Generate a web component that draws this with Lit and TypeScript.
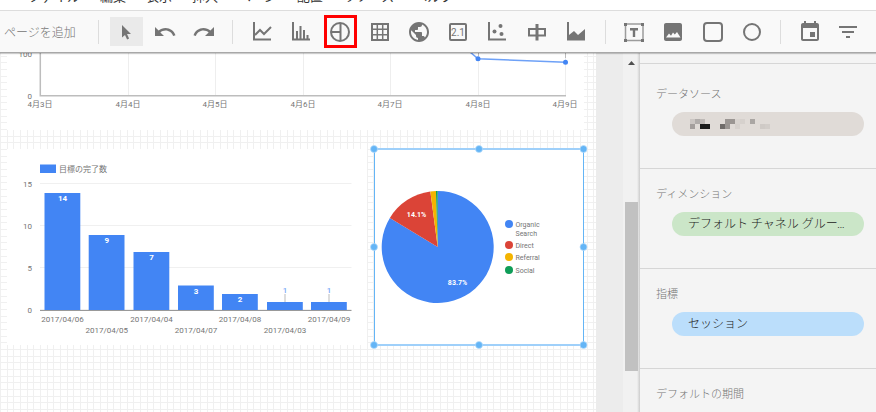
import { LitElement, html, svg, css, TemplateResult } from "lit";
import { customElement } from "lit/decorators.js";

type Icon = { label: string; art: TemplateResult; state?: string };

const axes = svg`<path fill="none" stroke="currentColor" stroke-width="2" d="M4 2v17.500h17"/>`;

const editTools: Icon[] = [
  { label: "選択", state: "active", art: svg`<path fill="currentColor" d="M8 5v12.600l3-2.700 2.100 4.500 2-.9-2.100-4.400h4z"/>` },
  { label: "元に戻す", art: svg`<path fill="currentColor" d="M12.500 8c-2.650 0-5.050.99-6.900 2.600L2 7v9h9l-3.620-3.620c1.390-1.160 3.160-1.880 5.120-1.880 3.540 0 6.550 2.310 7.600 5.500l2.370-.78C21.080 11.030 17.150 8 12.500 8z"/>` },
  { label: "やり直す", art: svg`<path fill="currentColor" d="M18.400 10.600C16.550 8.990 14.150 8 11.500 8c-4.650 0-8.580 3.030-9.960 7.220L3.900 16c1.050-3.190 4.050-5.500 7.600-5.500 1.950 0 3.730.72 5.120 1.880L13 16h9V7l-3.600 3.600z"/>` },
];

const chartTools: Icon[] = [
  { label: "期間", art: svg`${axes}<path fill="none" stroke="currentColor" stroke-width="2" d="M5 15l5-5 4 4 7-7"/>` },
  { label: "棒グラフ", art: svg`${axes}<path fill="none" stroke="currentColor" stroke-width="2" d="M8 11v8M11.500 6v13M15 10v9M18.500 15v4"/>` },
  { label: "円グラフ", state: "marked", art: svg`<g fill="none" stroke="currentColor" stroke-width="2"><circle cx="12" cy="12" r="9"/><path d="M12.500 3v18M3 12h9.500"/></g>` },
  { label: "表", art: svg`<path fill="none" stroke="currentColor" stroke-width="2" d="M4 4h16v16H4z"/><path fill="none" stroke="currentColor" stroke-width="1.500" d="M3 9.300h18M3 14.700h18M9.300 3v18M14.700 3v18"/>` },
  { label: "地図", art: svg`<path fill="currentColor" d="M12 2C6.480 2 2 6.480 2 12s4.480 10 10 10 10-4.480 10-10S17.520 2 12 2zm-1 17.930c-3.950-.49-7-3.850-7-7.930 0-.62.080-1.210.210-1.790L9 15v1c0 1.100.9 2 2 2v1.930zm6.900-2.540c-.26-.81-1-1.390-1.900-1.390h-1v-3c0-.55-.45-1-1-1H8v-2h2c.55 0 1-.45 1-1V7h2c1.100 0 2-.9 2-2v-.41c2.930 1.190 5 4.060 5 7.410 0 2.080-.8 3.970-2.100 5.390z"/>` },
  { label: "スコアカード", art: svg`<rect x="4" y="4" width="16" height="16" rx="1" fill="none" stroke="currentColor" stroke-width="2"/><text class="score" x="12" y="16" text-anchor="middle" fill="currentColor">2.1</text>` },
  { label: "散布図", art: svg`${axes}<g fill="currentColor"><circle cx="15.500" cy="6" r="2"/><circle cx="9.500" cy="11.500" r="2"/><circle cx="16.500" cy="14" r="2"/></g>` },
  { label: "ブレット", art: svg`<path fill="none" stroke="currentColor" stroke-width="2" d="M4 9h16v6.500H4z"/><path fill="none" stroke="currentColor" stroke-width="3" d="M12 4v16.500"/>` },
  { label: "面グラフ", art: svg`${axes}<path fill="currentColor" d="M5 19v-4l5-4 4 4 7-6v10z"/>` },
];

const shapeTools: Icon[] = [
  { label: "テキスト", art: svg`<rect x="3.500" y="4" width="17.500" height="16.500" fill="none" stroke="currentColor" stroke-opacity=".7" stroke-width="1.500"/><path fill="currentColor" d="M2 3h3v3H2zM19 3h3v3h-3zM2 19h3v3H2zM19 19h3v3h-3zM8 8h8v2.500h-2.800V17h-2.400v-6.500H8z"/>` },
  { label: "画像", art: svg`<path fill="currentColor" d="M21 19V5c0-1.100-.9-2-2-2H5c-1.100 0-2 .9-2 2v14c0 1.100.9 2 2 2h14c1.100 0 2-.9 2-2zM5 17.500l3-4 2 2.300 2-3.300 1.800 2 2.200-2.500 3.500 5.500z"/>` },
  { label: "長方形", art: svg`<rect x="3" y="3" width="18" height="18" rx="3" fill="none" stroke="currentColor" stroke-width="2"/>` },
  { label: "円", art: svg`<circle cx="12" cy="12" r="8" fill="none" stroke="currentColor" stroke-width="2"/>` },
];

const controlTools: Icon[] = [
  { label: "期間設定", art: svg`<path fill="currentColor" d="M17 12h-5v5h5v-5zM16 1v2H8V1H6v2H5c-1.110 0-1.990.9-1.990 2L3 19c0 1.100.89 2 2 2h14c1.100 0 2-.9 2-2V5c0-1.100-.9-2-2-2h-1V1h-2zm3 18H5V8h14v11z"/>` },
  { label: "フィルタ", art: svg`<path fill="currentColor" d="M10 18h4v-2h-4v2zM3 6v2h18V6H3zm3 7h12v-2H6v2z"/>` },
];

const days = [40, 128, 215, 303, 390, 478, 565];

const bars = [
  { value: 14, date: "2017/04/06", x: 44.5, top: 193 },
  { value: 9, date: "2017/04/05", x: 88.7, top: 235 },
  { value: 7, date: "2017/04/04", x: 133.5, top: 252 },
  { value: 3, date: "2017/04/07", x: 178, top: 285.5 },
  { value: 2, date: "2017/04/08", x: 222, top: 294 },
  { value: 1, date: "2017/04/03", x: 267, top: 302 },
  { value: 1, date: "2017/04/09", x: 311, top: 302 },
];

const scale = [
  { value: 15, y: 184 },
  { value: 10, y: 226 },
  { value: 5, y: 268 },
  { value: 0, y: 310 },
];

const slices = [
  { name: ["Organic", "Search"], from: 0, to: 0.837, color: "#4285f4", y: 224 },
  { name: ["Direct"], from: 0.837, to: 0.979, color: "#db4437", y: 245 },
  { name: ["Referral"], from: 0.979, to: 0.995, color: "#f4b400", y: 257 },
  { name: ["Social"], from: 0.995, to: 1, color: "#0f9d58", y: 270 },
];

const slicePath = (from: number, to: number) => {
  const at = (t: number) =>
    `${437.7 + 56 * Math.sin(t * 2 * Math.PI)} ${247 - 56 * Math.cos(t * 2 * Math.PI)}`;
  return `M437.7 247L${at(from)}A56 56 0 ${to - from > 0.5 ? 1 : 0} 1 ${at(to)}Z`;
};

const handles = [
  [374, 149], [479, 149], [583.5, 149], [374, 247],
  [583.5, 247], [374, 345], [479, 345], [583.5, 345],
];

/* Masked data source name: x, y, fill of each 5px cell */
const mask: [number, number, string][] = [
  [0, 0, "#cbc6c3"], [5, 0, "#b0acaa"], [10, 0, "#bfbab7"], [35, 0, "#9b9693"],
  [40, 0, "#9b9693"], [45, 0, "#d9d4d0"], [50, 0, "#d6d1cd"], [60, 0, "#aaa6a3"],
  [0, 5, "#a39e9c"], [10, 5, "#1c1c1c"], [15, 5, "#1c1c1c"], [30, 5, "#6f6b69"],
  [35, 5, "#9a9592"], [45, 5, "#d6d1cd"], [70, 5, "#cfcac6"], [75, 5, "#d2cdc9"],
];

@customElement("app-root")
export class AppRoot extends LitElement {
  static styles = css`
    :host {
      display: flex;
      flex-direction: column;
      height: 100vh;
      overflow: hidden;
      background: #fff;
      color: #757575;
      font-family: Roboto, "Noto Sans CJK JP", sans-serif;
      font-size: 12px;
    }
    button {
      border: 0;
      padding: 0;
      margin: 0;
      background: none;
      color: inherit;
      font: inherit;
      white-space: nowrap;
    }
    .menu {
      display: flex;
      align-items: flex-end;
      flex: none;
      gap: 20px;
      height: 10px;
      padding-left: 28px;
      overflow: hidden;
      color: #333;
      font-size: 13px;
    }
    .menu button {
      line-height: 20px;
      height: 20px;
      margin-bottom: 3px;
    }
    .toolbar {
      position: relative;
      z-index: 1;
      display: flex;
      align-items: center;
      flex: none;
      height: 41px;
      border-top: 1px solid #ddd;
      border-bottom: 1px solid #a8a8a8;
      background: #f9f9f9;
      box-shadow: 0 1px 1px #0003;
    }
    .add {
      width: 98px;
      padding-left: 4px;
      text-align: left;
      font-weight: 300;
    }
    .group {
      display: flex;
      justify-content: space-between;
      margin: 0 12px;
    }
    .edit { width: 111px; margin-left: 11px; }
    .charts { width: 348px; }
    .shapes { width: 151px; }
    .controls { width: 71px; }
    .rule {
      width: 1px;
      height: 24px;
      background: #ddd;
    }
    .tool {
      display: flex;
      align-items: center;
      justify-content: center;
      box-sizing: border-box;
      width: 33px;
      height: 33px;
    }
    .tool svg { flex: none; width: 24px; height: 24px; }
    .active { height: 29px; align-self: center; background: #eaeaea; }
    .marked { border: 3px solid #f00; }
    .score { font: 400 10px Roboto, sans-serif; }
    .main {
      display: flex;
      flex: 1;
      min-height: 0;
    }
    .workspace {
      flex: 1;
      min-width: 0;
      overflow: hidden;
      padding-right: 27px;
      background: #ececec;
    }
    .page {
      display: flex;
      flex-direction: column;
      gap: 19px;
      box-sizing: border-box;
      min-height: 100%;
      padding: 0 12px 0 7px;
      background-color: #fff;
      background-image:
        linear-gradient(90deg, #f0f0f0 1px, transparent 1px 7px, #f0f0f0 7px 8px, transparent 8px 13px, #f0f0f0 13px 14px, transparent 14px),
        linear-gradient(#f0f0f0 1px, transparent 1px 7px, #f0f0f0 7px 8px, transparent 8px 13px, #f0f0f0 13px 14px, transparent 14px);
      background-size: 20px 20px;
      background-position: 0 16px;
    }
    .row {
      display: grid;
      grid-template-columns: 360fr 210fr;
      gap: 7px;
      align-items: start;
    }
    .chart {
      display: block;
      width: 100%;
      background: #fff;
      fill: #757575;
      font-size: 8px;
    }
    .selected { overflow: visible; }
    .small { font-size: 7px; }
    .value { fill: #fff; font-weight: 700; }
    .above { fill: #7baaf7; font-weight: 500; }
    .scroll {
      display: flex;
      flex-direction: column;
      align-items: center;
      box-sizing: border-box;
      width: 17px;
      padding: 8px 2px 41px;
      background: linear-gradient(90deg, #f1f1f1 14px, #ccc);
    }
    .arrow {
      width: 7px;
      height: 4px;
      background: #505050;
      clip-path: polygon(50% 0, 100% 100%, 0 100%);
    }
    .thumb {
      width: 13px;
      flex: 0 1 169px;
      margin-top: auto;
      background: #c1c1c1;
    }
    .panel {
      box-sizing: border-box;
      width: 236px;
      padding-top: 10px;
      background: #f4f4f4;
    }
    section {
      box-sizing: border-box;
      height: 100px;
      padding: 18px 12px 0 16px;
      border-top: 1px solid #d6d6d6;
    }
    section:first-child { height: 105px; padding-top: 23px; }
    h2 {
      margin: 0 0 9px;
      font-size: 11px;
      line-height: 16px;
      font-weight: 300;
    }
    .pill {
      display: block;
      width: calc(100% - 16px);
      height: 24px;
      margin-left: 16px;
      padding: 0 16px;
      border-radius: 12px;
      overflow: hidden;
      text-overflow: ellipsis;
      text-align: left;
      line-height: 24px;
      color: #212121;
      font-weight: 300;
    }
    .source { background: #e0dbd7; padding-left: 18px; }
    .source svg { display: block; }
    .dimension { background: #cbe6c8; }
    .metric { background: #bbdefb; }
  `;

  private tools(name: string, icons: Icon[]) {
    return html`<div class="group ${name}">
      ${icons.map(
        (i) => html`<button class="tool ${i.state ?? ""}" aria-label=${i.label}>
          <svg viewBox="0 0 24 24" aria-hidden="true">${i.art}</svg>
        </button>`
      )}
    </div>`;
  }

  private lineChart() {
    return html`<svg class="chart" viewBox="7 53 577 77" role="img" aria-label="期間グラフ">
      ${days.map((x) => svg`<path stroke="#eee" d="M${x + 0.5} 53V96"/>`)}
      <path fill="none" stroke="#bdbdbd" stroke-width="1.5" d="M40.300 53V95.800H566"/>
      <path stroke="#bbb" d="M478.500 53v3M565.500 53v5"/>
      <text x="32" y="57" text-anchor="end">100</text>
      <text x="32" y="99" text-anchor="end">0</text>
      ${days.map((x, i) => svg`<text x=${x} y="107" text-anchor="middle">4月${i + 3}日</text>`)}
      <path fill="none" stroke="#6ea1f7" stroke-width="1.5" d="M470 52l8 6.700 87.500 3.500"/>
      <circle cx="478" cy="58.700" r="2.500" fill="#4285f4"/>
      <circle cx="565.500" cy="62.200" r="2.500" fill="#4285f4"/>
    </svg>`;
  }

  private barChart() {
    return html`<svg class="chart" viewBox="7 149 360 196" role="img" aria-label="目標の完了数">
      <rect x="40" y="164.500" width="16" height="8.500" fill="#4285f4"/>
      <text x="59" y="172">目標の完了数</text>
      ${scale.map(
        (s) => svg`<path stroke="#f0f0f0" d="M40 ${s.y - 0.5}H351.500"/>
          <text x="32" y=${s.y + 3} text-anchor="end">${s.value}</text>`
      )}
      ${bars.map((b, i) => {
        const mid = b.x + 18;
        const above = b.value === 1;
        return svg`<rect x=${b.x} y=${b.top} width="35.800" height=${310 - b.top} fill="#4285f4"/>
          ${above ? svg`<path stroke="#bbb" d="M${mid} 294V302"/>` : ""}
          <text class=${above ? "above" : "value"} x=${mid} y=${above ? 293 : b.top + 8} text-anchor="middle">${b.value}</text>
          <text x=${mid} y=${i % 2 ? 333 : 322} text-anchor="middle">${b.date}</text>`;
      })}
      <path stroke="#999" d="M40 310.500H351.500"/>
    </svg>`;
  }

  private pieChart() {
    return html`<svg class="chart selected small" viewBox="374 149 210 196" role="img" aria-label="チャネル別セッション">
      ${slices.map(
        (s) => svg`<path fill=${s.color} d=${slicePath(s.from, s.to)}/>
          <circle cx="509" cy=${s.y} r="4" fill=${s.color}/>
          ${s.name.map((n, i) => svg`<text x="515.500" y=${s.y + 3 + i * 9}>${n}</text>`)}`
      )}
      <text class="value" x="416.500" y="217" text-anchor="middle">14.1%</text>
      <text class="value" x="457.500" y="285" text-anchor="middle">83.7%</text>
      <path stroke="#9fd0fa" stroke-width="2" d="M374 149H584M374 345H584"/>
      <path stroke="#64b5f6" d="M374.500 149V345M583.500 149V345"/>
      ${handles.map(
        ([x, y]) => svg`<circle cx=${x} cy=${y} r="3.500" fill="#64b5f6" stroke="#b9dcfb" stroke-width=".7"/>`
      )}
    </svg>`;
  }

  render() {
    return html`
      <nav class="menu">
        ${["ファイル", "編集", "表示", "挿入", "ページ", "配置", "リソース", "ヘルプ"].map(
          (m) => html`<button>${m}</button>`
        )}
      </nav>
      <div class="toolbar" role="toolbar">
        <button class="add">ページを追加</button>
        <span class="rule"></span>
        ${this.tools("edit", editTools)}
        <span class="rule"></span>
        ${this.tools("charts", chartTools)}
        <span class="rule"></span>
        ${this.tools("shapes", shapeTools)}
        <span class="rule"></span>
        ${this.tools("controls", controlTools)}
      </div>
      <div class="main">
        <main class="workspace">
          <div class="page">
            ${this.lineChart()}
            <div class="row">${this.barChart()}${this.pieChart()}</div>
          </div>
        </main>
        <div class="scroll" aria-hidden="true">
          <span class="arrow"></span>
          <span class="thumb"></span>
        </div>
        <aside class="panel">
          <section>
            <h2>データソース</h2>
            <button class="pill source" aria-label="データソース">
              <svg width="80" height="10" aria-hidden="true">
                ${mask.map(([x, y, c]) => svg`<rect x=${x} y=${y} width="5" height="5" fill=${c}/>`)}
              </svg>
            </button>
          </section>
          <section>
            <h2>ディメンション</h2>
            <button class="pill dimension">デフォルト チャネル グループ</button>
          </section>
          <section>
            <h2>指標</h2>
            <button class="pill metric">セッション</button>
          </section>
          <section>
            <h2>デフォルトの期間</h2>
          </section>
        </aside>
      </div>
    `;
  }
}
